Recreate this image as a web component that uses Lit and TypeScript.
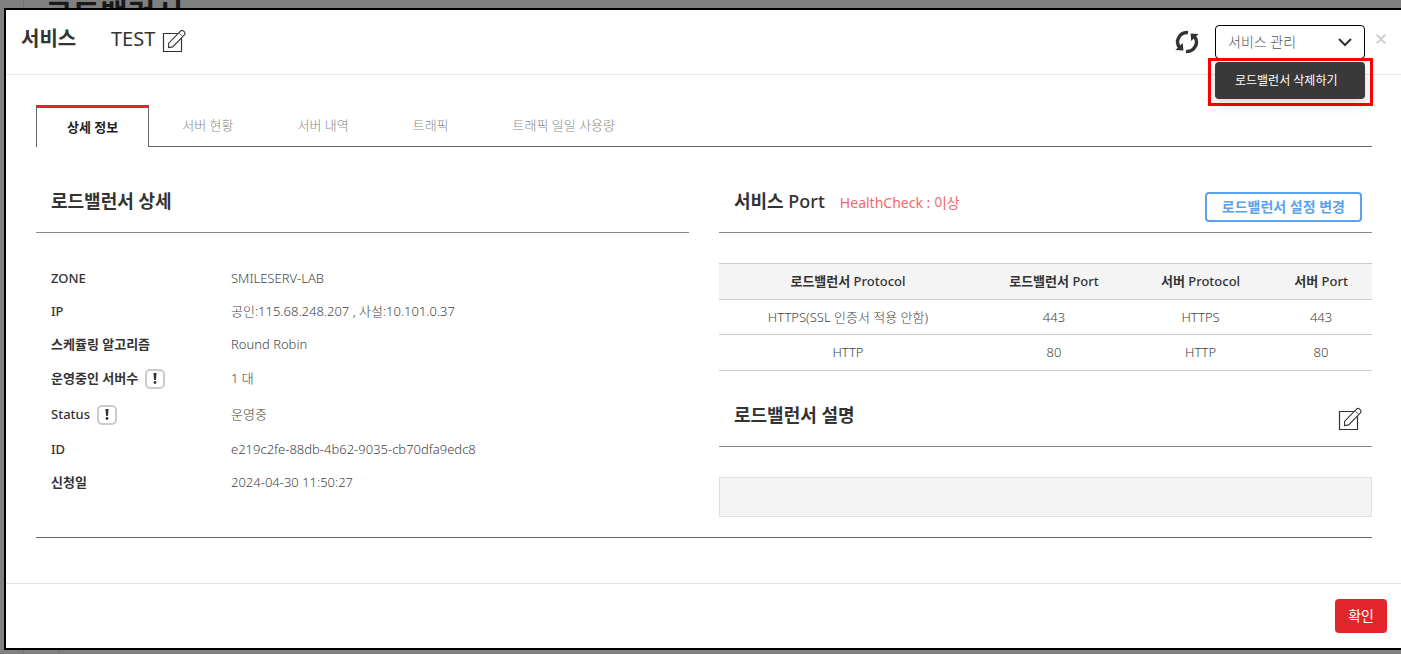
import { LitElement, html, css, svg, nothing } from "lit";
import { customElement, state } from "lit/decorators.js";

interface Detail {
  label: string;
  value: string;
  help?: boolean;
}

const TABS = ["상세 정보", "서버 현황", "서버 내역", "트래픽", "트래픽 일일 사용량"];

const DETAILS: Detail[] = [
  { label: "ZONE", value: "SMILESERV-LAB" },
  { label: "IP", value: "공인:115.68.248.207 , 사설:10.101.0.37" },
  { label: "스케쥴링 알고리즘", value: "Round Robin" },
  { label: "운영중인 서버수", value: "1 대", help: true },
  { label: "Status", value: "운영중", help: true },
  { label: "ID", value: "e219c2fe-88db-4b62-9035-cb70dfa9edc8" },
  { label: "신청일", value: "2024-04-30 11:50:27" },
];

const COLUMNS = ["로드밸런서 Protocol", "로드밸런서 Port", "서버 Protocol", "서버 Port"];

const PORTS = [
  ["HTTPS(SSL 인증서 적용 안함)", "443", "HTTPS", "443"],
  ["HTTP", "80", "HTTP", "80"],
];

// Headings set Hangul in bold and Latin in medium.
const heading = (text: string) =>
  html`<span>${text
    .split(/([가-힣]+(?: [가-힣]+)*)/)
    .filter((part) => part !== "")
    .map((part) => (/[가-힣]/.test(part) ? html`<b>${part}</b>` : part))}</span>`;

const editIcon = svg`<svg width="24" height="24" viewBox="0 0 24 24" fill="none" stroke="#333" aria-hidden="true">
  <path d="M16.5 4.500H1.500V22.500H19.500V9" stroke-width="1.200"/>
  <path d="M6.500 18.500L6.700 14.200L18.500 2.100Q19.800 .8 21.300 1.900L22.600 3.200Q23.600 4.600 22.400 5.900L10.700 17.900Z" fill="#fff" stroke-width="1.100"/>
  <path d="M17 3.800L20.800 7.500" stroke-width=".9" stroke="#555"/>
</svg>`;

const refreshIcon = svg`<svg width="24" height="24" viewBox="0 0 24 24" fill="none" aria-hidden="true">
  <path d="M13 2.600A9.600 9.300 0 0 0 5 18M11 21.400A9.600 9.300 0 0 0 19 6" stroke="#333" stroke-width="3.400"/>
  <path d="M15.600 3.400L23.600 4L16.200 11ZM8.400 20.600L.4 20L7.800 13Z" fill="#333"/>
</svg>`;

@customElement("app-root")
export class AppRoot extends LitElement {
  @state() private active = 0;
  @state() private menuOpen = true;

  static styles = css`
    :host {
      display: block;
      position: relative;
      min-height: 100vh;
      overflow: hidden;
      background: #808080;
      color: #333;
      font: 300 13px/20px "Noto Sans", "Noto Sans CJK KR", sans-serif;
    }
    * { box-sizing: border-box; }
    h1, h2, p, dl, dd { margin: 0; }
    b { font-weight: 700; }
    button {
      font: inherit;
      color: inherit;
      margin: 0;
      padding: 0;
      border: 0;
      background: none;
      cursor: pointer;
    }
    svg { display: block; }
    .page {
      position: absolute;
      inset: 0;
      display: grid;
      grid-template-columns: 24px 36px 1fr;
    }
    .rail { border-right: 1px solid #737373; }
    .page-title {
      position: absolute;
      top: 0;
      left: 45px;
      height: 8px;
      overflow: hidden;
      display: flex;
      align-items: center;
      font-size: 30px;
      line-height: 20px;
      font-weight: 700;
      color: #1a1a1a;
    }
    .page-title span { padding-top: 20px; }
    .dialog {
      position: relative;
      margin: 8px 0 4px 4px;
      border: 2px solid #000;
      border-right: 0;
      background: #fff;
    }
    .header {
      display: flex;
      align-items: flex-start;
      height: 65px;
      padding: 15px 12px 0 15px;
      border-bottom: 1px solid #e5e5e5;
    }
    .title {
      font-size: 20px;
      line-height: 28px;
      font-weight: 500;
      width: 90px;
    }
    .name {
      font-size: 20px;
      line-height: 28px;
      font-weight: 400;
      margin-right: 7px;
    }
    .edit { margin-top: 4px; }
    .tools {
      display: flex;
      align-items: flex-start;
      margin-left: auto;
    }
    .refresh { margin: 5px 16px 0 0; }
    .dropdown { position: relative; width: 150px; }
    .toggle {
      display: flex;
      align-items: center;
      justify-content: space-between;
      width: 100%;
      height: 34px;
      padding: 0 12px;
      border: 1px solid #000;
      border-radius: 4px;
      font-size: 14px;
      color: #555;
    }
    .marked {
      position: absolute;
      top: 33px;
      left: -7px;
      right: -8px;
      padding: 1px 5px 4px 4px;
      border: 3px solid #f00;
      z-index: 2;
    }
    .menu {
      border-radius: 4px;
      background: #393939;
      box-shadow: 0 6px 12px rgba(0, 0, 0, 0.15);
    }
    .item {
      width: 100%;
      height: 37px;
      padding-left: 20px;
      text-align: left;
      font-size: 12px;
      font-weight: 400;
      color: #fff;
    }
    .close { margin: 6px 0 0 8px; padding: 3px; }
    .body { padding: 30px 29px 45px 30px; }
    .tabs {
      display: flex;
      height: 42px;
      border-bottom: 1px solid #666;
    }
    .tab {
      padding: 0 32px 2px;
      color: #888;
    }
    .tab[aria-selected="true"] {
      height: 42px;
      padding: 0 30px 1px;
      margin-right: 1px;
      border: 1px solid #666;
      border-top: 3px solid #e3242b;
      border-bottom: 0;
      background: #fff;
      color: #222;
      font-weight: 700;
    }
    .columns {
      display: grid;
      grid-template-columns: minmax(0, 1fr) minmax(0, 1fr);
      gap: 30px;
      padding-bottom: 20px;
      border-bottom: 1px solid #666;
    }
    .head {
      display: flex;
      align-items: flex-start;
      gap: 15px;
      height: 86px;
      padding: 40px 10px 0 15px;
      border-bottom: 1px solid #888;
    }
    .head.compact { height: 76px; padding-top: 30px; }
    .head h2 {
      font-size: 18px;
      line-height: 28px;
      font-weight: 500;
    }
    .health {
      font-size: 14px;
      line-height: 32px;
      font-weight: 400;
      color: #f0686e;
    }
    .change {
      margin: 5px 0 0 auto;
      height: 30px;
      padding: 0 15px;
      border: 2px solid #5ba2ee;
      border-radius: 4px;
      font-size: 14px;
      font-weight: 700;
      color: #5ba2ee;
    }
    .head .edit { margin: 6px 0 0 auto; }
    .details { padding: 28px 15px 0; }
    .row {
      display: grid;
      grid-template-columns: 180px 1fr;
      align-items: center;
      min-height: 33px;
    }
    .row.tall { min-height: 36px; }
    dt {
      display: flex;
      align-items: center;
      gap: 7px;
      font-weight: 500;
    }
    dd { color: #444; }
    .help {
      display: grid;
      place-items: center;
      width: 20px;
      height: 20px;
      margin-top: 1px;
      border: 2px solid #ccc;
      border-radius: 5px;
    }
    table {
      width: 100%;
      margin-top: 30px;
      table-layout: fixed;
      border-collapse: collapse;
      text-align: center;
    }
    .c1 { width: 39.5%; }
    .c2 { width: 23.6%; }
    .c3 { width: 21.3%; }
    th, td {
      height: 35px;
      padding: 0;
      border-bottom: 1px solid #ccc;
    }
    th {
      height: 36px;
      padding-bottom: 2px;
      border-top: 1px solid #ccc;
      background: #f4f4f4;
      font-weight: 500;
    }
    tr:last-child td { height: 36px; padding-bottom: 1px; }
    td { color: #444; }
    .memo {
      display: block;
      width: 100%;
      height: 40px;
      margin-top: 30px;
      padding: 9px;
      border: 1px solid #e0e0e0;
      border-radius: 0;
      background: #f4f4f4;
      font: inherit;
      resize: none;
      outline: 0;
    }
    .footer {
      display: flex;
      justify-content: flex-end;
      padding: 15px 14px;
      border-top: 1px solid #e5e5e5;
    }
    .confirm {
      height: 34px;
      padding: 0 13px;
      border-radius: 4px;
      background: #e3242b;
      color: #fff;
      font-size: 14px;
      font-weight: 400;
    }
  `;

  private renderDetail(d: Detail) {
    return html`<div class="row ${d.help ? "tall" : ""}">
      <dt>
        ${heading(d.label)}
        ${d.help
          ? html`<button class="help" aria-label="도움말">
              <svg width="4" height="11" viewBox="0 0 4 11" fill="#333" aria-hidden="true">
                <path d="M.4 0H3.600L2.900 7H1.100Z" /><circle cx="2" cy="9.500" r="1.400" />
              </svg>
            </button>`
          : nothing}
      </dt>
      <dd>${d.value}</dd>
    </div>`;
  }

  render() {
    return html`
      <div class="page" aria-hidden="true">
        <div class="rail"></div>
        <div class="rail"></div>
        <div class="page-title"><span>로드밸런서</span></div>
      </div>
      <section class="dialog" role="dialog" aria-labelledby="title">
        <header class="header">
          <h1 class="title" id="title">${heading("서비스")}</h1>
          <span class="name">TEST</span>
          <button class="edit" aria-label="이름 수정">${editIcon}</button>
          <div class="tools">
            <button class="refresh" aria-label="새로고침">${refreshIcon}</button>
            <div class="dropdown">
              <button
                class="toggle"
                aria-haspopup="menu"
                aria-expanded=${this.menuOpen}
                @click=${() => (this.menuOpen = !this.menuOpen)}
              >
                서비스 관리
                <svg width="14" height="9" viewBox="0 0 14 9" fill="none" stroke="#333" stroke-width="2" aria-hidden="true">
                  <path d="M1 1L7 7L13 1" />
                </svg>
              </button>
              ${this.menuOpen
                ? html`<div class="marked">
                    <div class="menu" role="menu">
                      <button class="item" role="menuitem">로드밸런서 삭제하기</button>
                    </div>
                  </div>`
                : nothing}
            </div>
            <button class="close" aria-label="닫기">
              <svg width="10" height="10" viewBox="0 0 10 10" stroke="#ccc" stroke-width="1.800" aria-hidden="true">
                <path d="M.7 .7L9.300 9.300M9.300 .7L.7 9.300" />
              </svg>
            </button>
          </div>
        </header>
        <div class="body">
          <div class="tabs" role="tablist">
            ${TABS.map(
              (t, i) => html`<button
                class="tab"
                role="tab"
                aria-selected=${i === this.active ? "true" : "false"}
                @click=${() => (this.active = i)}
              >${t}</button>`
            )}
          </div>
          <div class="columns">
            <section>
              <div class="head"><h2>${heading("로드밸런서 상세")}</h2></div>
              <dl class="details">${DETAILS.map((d) => this.renderDetail(d))}</dl>
            </section>
            <section>
              <div class="head">
                <h2>${heading("서비스 Port")}</h2>
                <p class="health">HealthCheck : 이상</p>
                <button class="change">로드밸런서 설정 변경</button>
              </div>
              <table>
                <colgroup><col class="c1" /><col class="c2" /><col class="c3" /><col /></colgroup>
                <thead>
                  <tr>${COLUMNS.map((c) => html`<th scope="col">${heading(c)}</th>`)}</tr>
                </thead>
                <tbody>
                  ${PORTS.map((r) => html`<tr>${r.map((c) => html`<td>${c}</td>`)}</tr>`)}
                </tbody>
              </table>
              <div class="head compact">
                <h2 id="memo-title">${heading("로드밸런서 설명")}</h2>
                <button class="edit" aria-label="설명 수정">${editIcon}</button>
              </div>
              <textarea class="memo" aria-labelledby="memo-title" readonly></textarea>
            </section>
          </div>
        </div>
        <footer class="footer"><button class="confirm">확인</button></footer>
      </section>
    `;
  }
}
